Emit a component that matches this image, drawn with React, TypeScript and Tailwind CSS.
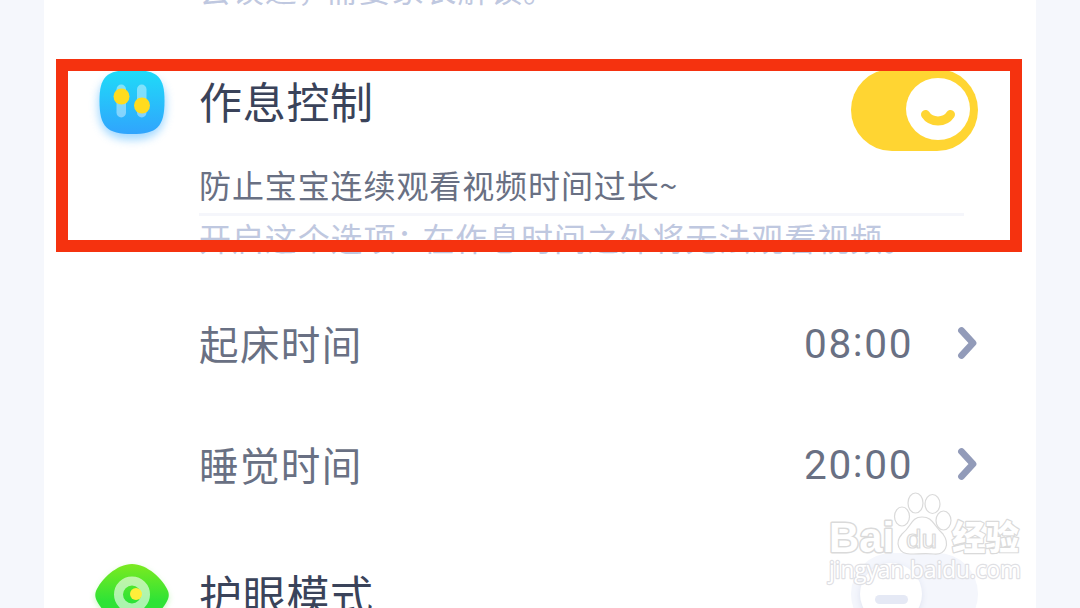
import React from "react";

const SlidersIcon = () => (
  <svg width="90" height="90" viewBox="0 0 90 90" className="shrink-0">
    <defs>
      <linearGradient id="blue" x1="0" y1="0" x2="0" y2="1">
        <stop offset="0" stopColor="#1fdcf8" />
        <stop offset="1" stopColor="#30a4fd" />
      </linearGradient>
      <filter id="blueGlow" x="-30%" y="-30%" width="160%" height="160%">
        <feGaussianBlur stdDeviation="4" />
      </filter>
    </defs>
    <path
      d="M47 17C71 17 81 20 81 45C81 70 71 80 47 80C23 80 13 70 13 45C13 20 23 17 47 17Z"
      fill="#8fd0ff"
      opacity="0.8"
      filter="url(#blueGlow)"
    />
    <path
      d="M47 10C73 10 79.500 17 79.500 41C79.500 67 72 74 47 74C22 74 14.500 67 14.500 41C14.500 17 21 10 47 10Z"
      fill="url(#blue)"
    />
    <rect x="31.500" y="24.500" width="9.500" height="33" rx="4.750" fill="#fff" opacity="0.42" />
    <rect x="52" y="24.500" width="9.500" height="33" rx="4.750" fill="#fff" opacity="0.42" />
    <circle cx="36.500" cy="36.500" r="8" fill="#ffdc1e" />
    <circle cx="57" cy="45.500" r="8" fill="#ffdc1e" />
  </svg>
);

const EyeIcon = () => (
  <svg width="90" height="80" viewBox="0 0 90 80" className="shrink-0">
    <defs>
      <linearGradient id="green" x1="0" y1="0" x2="0" y2="1">
        <stop offset="0" stopColor="#7cea20" />
        <stop offset="0.6" stopColor="#2ee336" />
        <stop offset="1" stopColor="#2ee336" />
      </linearGradient>
      <filter id="greenGlow" x="-30%" y="-30%" width="160%" height="160%">
        <feGaussianBlur stdDeviation="3" />
      </filter>
    </defs>
    <path
      d="M10 43C19 22 34 12 47 12C60 12 75 22 84 43C75 64 60 76 47 76C34 76 19 64 10 43Z"
      fill="#a8f59a"
      opacity="0.7"
      filter="url(#greenGlow)"
    />
    <path
      d="M11 36C16 24 32 9 47 9C62 9 78 24 83 36Q84.500 40 83 44C78 56 62 71 47 71C32 71 16 56 11 44Q9.500 40 11 36Z"
      fill="url(#green)"
    />
    <circle cx="47" cy="39.500" r="13.500" fill="none" stroke="#fff" strokeOpacity="0.6" strokeWidth="9" />
    <circle cx="51" cy="39" r="6" fill="#ffee3a" />
  </svg>
);

const ArrowIcon = () => (
  <svg width="22" height="36" viewBox="0 0 22 36" className="shrink-0">
    <path
      d="M4.500 5.500L16 18L4.500 30.500"
      fill="none"
      stroke="#929bb9"
      strokeWidth="6.800"
      strokeLinecap="round"
      strokeLinejoin="round"
    />
  </svg>
);

const SwitchOn = () => (
  <div className="flex h-[82px] w-[127px] shrink-0 justify-end rounded-full bg-[#ffd532] pt-[9px] pr-2">
    <div className="flex h-[62px] w-16 justify-center rounded-[50%] bg-white">
      <svg width="64" height="62" viewBox="0 0 64 62">
        <path
          d="M19.500 36.500C25 45 39 45 44.500 36.500"
          fill="none"
          stroke="#ffd532"
          strokeWidth="9"
          strokeLinecap="round"
        />
      </svg>
    </div>
  </div>
);

const SwitchOff = () => (
  <div className="h-[82px] w-[127px] shrink-0 rounded-full bg-[#f4f6fc] pt-[10px] pl-[9px]">
    <div className="flex h-[62px] w-[62px] justify-center rounded-full bg-white pt-[32px] shadow-[0_2px_6px_#dde2f0]">
      <div className="h-[9px] w-[33px] rounded-full bg-[#e5e9f5]" />
    </div>
  </div>
);

const TimeRow = ({ label, time }: { label: string; time: string }) => {
  const [hour, minute] = time.split(":");
  return (
    <div className="flex h-[121px] shrink-0 items-center pr-[57px] pl-[155px] text-[#697083]">
      <span className="text-[39.5px] tracking-[1.4px]">{label}</span>
      <span className="mt-[4px] ml-auto font-[Roboto] text-[40.5px] tracking-[1.6px]">
        {hour}
        <span className="relative -top-[2px]">:</span>
        {minute}
      </span>
      <span className="ml-[44px]">
        <ArrowIcon />
      </span>
    </div>
  );
};

const Watermark = () => (
  <svg
    width="210"
    height="110"
    viewBox="820 485 210 110"
    className="absolute top-[485px] left-[820px]"
    fill="#fff"
    stroke="#dadada"
    strokeWidth="1.2"
    strokeLinejoin="round"
    fontFamily="'Liberation Sans', 'Noto Sans CJK SC', sans-serif"
  >
    <text
      x="829"
      y="552"
      fontSize="43"
      fontWeight="700"
      strokeWidth="3"
      paintOrder="stroke"
      textLength="65"
      lengthAdjust="spacingAndGlyphs"
    >
      Bai
    </text>
    <ellipse cx="902" cy="516.500" rx="7.500" ry="9.500" />
    <ellipse cx="915.500" cy="503" rx="7.500" ry="10" />
    <ellipse cx="932.500" cy="504" rx="7.500" ry="9.500" />
    <ellipse cx="943.500" cy="520.500" rx="7.500" ry="9.500" />
    <path d="M922 517C911 517 912 526 902 534C894 543 899 554 910 554C918 554 926 553 934 554C946 555 950 544 943 534C933 525 933 517 922 517Z" />
    <text x="906" y="548" fontSize="26" textLength="31" lengthAdjust="spacingAndGlyphs">
      du
    </text>
    <text
      x="952"
      y="550"
      fontSize="34"
      fontWeight="900"
      strokeWidth="2.400"
      paintOrder="stroke"
      fontFamily="'Noto Sans CJK SC', sans-serif"
      textLength="67"
      lengthAdjust="spacingAndGlyphs"
    >
      经验
    </text>
    <text
      x="829"
      y="578"
      fontSize="23"
      fontFamily="'Open Sans', sans-serif"
      strokeWidth="2.400"
      stroke="#dfe0e4"
      paintOrder="stroke"
      textLength="192"
      lengthAdjust="spacingAndGlyphs"
    >
      jingyan.baidu.com
    </text>
  </svg>
);

export default function App() {
  return (
    <div className="relative h-[608px] w-[1080px] overflow-hidden bg-[#f5f7fc] pr-[44px] pl-[44px] font-['Noto_Sans_CJK_SC',sans-serif] leading-none whitespace-nowrap">
      <div className="flex h-[608px] flex-col overflow-hidden bg-white">
        <p className="-mt-[28px] h-[88px] shrink-0 pl-[155px] text-[32px] tracking-[0.9px] text-[#bfc8e0]">
          会误退<span className="tracking-[-4px]">，</span>需要家长解锁。
        </p>

        <div className="flex h-[103px] shrink-0 pr-[58px] pl-[41px]">
          <SlidersIcon />
          <h2 className="mt-[19px] ml-[24px] text-[43px] tracking-[0.7px] text-[#3a435a]">作息控制</h2>
          <div className="mt-[9px] ml-auto">
            <SwitchOn />
          </div>
        </div>

        <div className="h-[119px] shrink-0 pr-[72px] pl-[155px] text-[32px] tracking-[0.9px]">
          <p className="h-[53px] border-b-[3px] border-[#f5f6fb] pt-[5px] text-[#697083]">
            防止宝宝连续观看视频时间过长~
          </p>
          <p className="mt-[5px] text-[#bfc8e0]">
            开启这个选项<span className="tracking-[-6px]">：</span>在作息时间之外将无法观看视频。
          </p>
        </div>

        <TimeRow label="起床时间" time="08:00" />
        <TimeRow label="睡觉时间" time="20:00" />

        <div className="mt-[31px] flex h-[90px] shrink-0 pr-[58px] pl-[41px]">
          <EyeIcon />
          <h2 className="mt-[17px] ml-[24px] text-[43px] tracking-[0.7px] text-[#3a435a]">护眼模式</h2>
          <div className="-mt-[2px] ml-auto">
            <SwitchOff />
          </div>
        </div>
      </div>

      <div className="absolute top-[59px] left-[56px] h-[193px] w-[966px] border-12 border-[#f5320f]" />
      <Watermark />
    </div>
  );
}
